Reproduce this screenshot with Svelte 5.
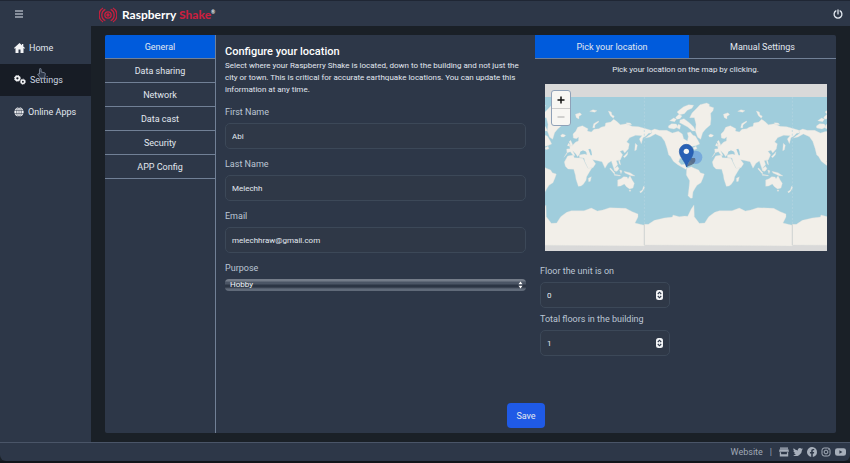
<script>
  const sections = ['General', 'Data sharing', 'Network', 'Data cast', 'Security', 'APP Config'];
  let section = $state('General');
  let mode = $state('pick');
  let firstName = $state('Abi');
  let lastName = $state('Melechh');
  let email = $state('melechhraw@gmail.com');
  let purpose = $state('Hobby');
  let floor = $state(0);
  let floors = $state(1);
  const worlds = [-444, 0, 444];
</script>

{#snippet spinner()}
  <svg class="spin" viewBox="0 0 7 10" aria-hidden="true">
    <rect width="7" height="10" rx="2.5" fill="#f1f3f5" />
    <path d="M1.8 4 3.5 2.2 5.2 4M1.8 6 3.5 7.8 5.2 6" fill="none" stroke="#2d3748" stroke-width="1.1" />
  </svg>
{/snippet}

<div class="shell">
  <header>
    <button class="icon menu" aria-label="Menu">
      <svg viewBox="0 0 8 8" width="8" height="8"><path d="M0 1h8M0 4h8M0 7h8" stroke="#e2e8f0" stroke-width="1.2" /></svg>
    </button>
    <a class="logo" href="#home">
      <svg viewBox="0 0 54 48" width="18" height="16" fill="none" stroke="#c8203f" stroke-width="4">
        <circle cx="27" cy="24" r="3" fill="#c8203f" />
        <circle cx="27" cy="24" r="9.500" />
        <path d="M19 7a19 19 0 0 0 0 34M35 7a19 19 0 0 1 0 34" />
        <path d="M12 3a25 25 0 0 0 0 42M42 3a25 25 0 0 1 0 42" stroke-width="3.500" />
        <path d="M5 8a27 27 0 0 0 0 32M49 8a27 27 0 0 1 0 32" stroke-width="2.500" />
      </svg>
      <span class="brand">Raspberry <b>Shake</b><sup>®</sup></span>
    </a>
    <button class="icon" aria-label="Power">
      <svg viewBox="0 0 10 10" width="10" height="10" fill="none" stroke="#e2e8f0" stroke-width="1.3" stroke-linecap="round">
        <path d="M5 .9v4M2.900 1.900a3.900 3.900 0 1 0 4.200 0" />
      </svg>
    </button>
  </header>

  <div class="body">
    <nav class="side" aria-label="Main">
      <a href="#home">
        <svg viewBox="0 0 11 10" width="11" height="10" fill="#f3f4f6"><path d="M5.500 0 0 5l.7.7.8-.6V10h3V6.600h2V10h3V5.100l.8.6L11 5 9.300 3.500V.9H8v1.400z" /></svg>
        Home
      </a>
      <a href="#settings" class="on">
        <svg viewBox="0 0 12 10" width="12" height="10" fill="none" stroke="#f3f4f6">
          <circle cx="3.400" cy="3.300" r="2" stroke-width="1.700" />
          <circle cx="3.400" cy="3.300" r="3" stroke-width=".8" stroke-dasharray="1.250 1.100" />
          <circle cx="8.900" cy="6.700" r="1.700" stroke-width="1.500" />
          <circle cx="8.900" cy="6.700" r="2.600" stroke-width=".8" stroke-dasharray="1.100 .95" />
        </svg>
        Settings
        <svg class="hand" viewBox="0 0 9 11" width="9" height="11"><path d="M2.500 6V1.300a.8.8 0 0 1 1.600 0V4l3.300.7c.8.200 1 .7.900 1.400L7.800 8.500v1.700H3.600L.8 6.800c-.4-.8.600-1.300 1.100-.7z" fill="#2d3748" stroke="#8a96a8" stroke-width=".8" /></svg>
      </a>
      <a href="#apps">
        <svg viewBox="0 0 10 10" width="10" height="10"><circle cx="5" cy="5" r="4.700" fill="#f3f4f6" /><path d="M0 3.500h10M0 6.500h10M5 0v10" stroke="#2d3748" stroke-width=".5" /><ellipse cx="5" cy="5" rx="2.300" ry="4.700" fill="none" stroke="#2d3748" stroke-width=".6" /></svg>
        Online Apps
      </a>
    </nav>

    <main>
      <div class="panel">
        <div class="sections" role="tablist">
          {#each sections as s}
            <button role="tab" aria-selected={section === s} class:on={section === s} onclick={() => (section = s)}>{s}</button>
          {/each}
        </div>

        <form class="content" onsubmit={(e) => e.preventDefault()}>
          <div class="cols">
            <div class="details">
              <h1>Configure your location</h1>
              <p>Select where your Raspberry Shake is located, down to the building and not just the city or town. This is critical for accurate earthquake locations. You can update this information at any time.</p>
              <div class="field"><label for="first">First Name</label><input id="first" type="text" bind:value={firstName} /></div>
              <div class="field"><label for="last">Last Name</label><input id="last" type="text" bind:value={lastName} /></div>
              <div class="field"><label for="email">Email</label><input id="email" type="email" bind:value={email} /></div>
              <div class="field">
                <label for="purpose">Purpose</label>
                <div class="pick">
                  <select id="purpose" bind:value={purpose}><option>Hobby</option></select>
                  <svg viewBox="0 0 5 8" width="5" height="8" fill="#fff" aria-hidden="true"><path d="M.5 3.300 2.500.5l2 2.800zM.5 4.700l2 2.800 2-2.800z" /></svg>
                </div>
              </div>
            </div>

            <div class="place">
              <div class="modes" role="tablist">
                <button type="button" role="tab" aria-selected={mode === 'pick'} class:on={mode === 'pick'} onclick={() => (mode = 'pick')}>Pick your location</button>
                <button type="button" role="tab" aria-selected={mode === 'manual'} class:on={mode === 'manual'} onclick={() => (mode = 'manual')}>Manual Settings</button>
              </div>
              <p class="hint">Pick your location on the map by clicking.</p>
              <div class="map">
                <svg class="world" viewBox="-405 27 846 501" preserveAspectRatio="xMidYMid slice" role="img" aria-label="World map">
                  <defs>
                    <g id="world" fill="#f2efe9" stroke="#dfe2df" stroke-width="1">
                      <path d="M-92 180l8-7-4-6 12-5 14 4 22 0 17 8 18-5 12 8 4 14 11 7 3-13-3-12 9-2 8 10 7 2 9 15 4 9-12 5-10 2-10 12-7 14 0 9 6 10-5 2-8-10-13-1-4 10 8 9 11-1 5 12-3 3-24-14-13-10-9-15-5-4-5-20-7-21-10-14-18-8-16 9-14 3 11-9z" />
                      <path d="M-35 153l10-7 14 1 5 9-12 6-16-3zM-31 137l12-8 8 4-5 7zM-13 127l10-9 9 5-6 8-10 2zM-9 111l10-8 10-8 15-6 15 2-5 9-14 6-9 10-14 3zM0 135l12-4 16 12 13 13 6 12-10 0-14-12-15-8-9-5zM-5 148l7 3-3 12-9-5z" />
                      <path d="M29 128l7-14 14-14 10-11 20-5 8 4 0 6 13 4-2 9-7 8 1 17-2 18-14 12-9 11-6 20-9-6-7-19 2-20-5-20zM86 181l6-4 9 4-5 5-8 0z" />
                      <path d="M20 280l14-5 9 5 13 5 5 8 12 4-4 12-6 14-12 8-7 11-5 9-2 18-5 1-8-8 3-23 2-22-10-17z" />
                      <path d="M105 236l-1-14 10-1-1-8 10-4 8-8 8-3 1-12-7 5-9-2-1-12 8-8 6-12 14-5 17 9-2 7 12 3 8-8 14-2 9-5 10-2 2-10 15-3 9-8 9 6 11 10 19-3 16 8 20 1 17 5 20 6 2 8-9 1-8 8-9 5-5 18-6-14 8-10-19-1-18 7-9 13 8 5-3 16-11 12-5-8-9 3 8 10-7 16-12 2 4 12-8 9 4 11-5-1-10-30-10 7-9 15-9-20-20-4-8-2 9 12-8 12-14 4-10-21-3-12-14-1 0-8 15-3 8 2-2-7-11-6-9 11-6 8-6-9-9-9 7 14-4 2-10-13-11 4-8 13z" />
                      <path d="M97 261l10-18 17-3 3 8 16 1 10 1 8 17 7 13 12-2-9 15-7 12-2 11-8 12-7 5-8 1-7-21-2-13-5-17-17-1-8-8z" />
                      <path d="M257 315l10-4 8-6 10 1 3 5 6-9 7 14 6 9-4 14-10 3-10-7-6-8-11 6-9 1zM291 345l6 0-3 5zM169 310l9-5-3 14-5 1zM323 350l8-5 4-12 3 5-6 10-6 6zM310 205l6 6-3 14-5 2zM274 245l9-9 5-6-2 10-8 8zM236 279l13 15-2 3-14-16zM248 280l9-6 4 7-6 8-7-3zM263 285l7 2-3 9zM276 289l18 4 15 10-12-1-18-8zM259 256l4 0 3 14-4-3zM246 298l19 3 0 2-18-2z" />
                      <path d="M106 212l4-8 4 5-1 5zM114 206l-3-6 5-4 5 10 1 6-8 1zM130 118l14-5 5 6-8 5 0 8-8-4zM173 109l10-5 12 3-7 5zM182 158l3-12 14-8 2 2-12 10-1 9zM229 108l9 3 2 9 7 3-3 7-9-8zM283 143l12 1 4 5-14 0zM38 219l10-5 3 7-9 3z" />
                      <path d="M-107 510v-62l12 0 18-12 17-4 12-3 25-3 2-6 19 5 15-2 10 1 11-23 8-11 1 35 15 20 16-1 12-19 18-13 14-5 38 0 22-8 18 9 16-3 21-7 48 2 20 10 17 7 0 9-9 18 28 7v62z" />
                    </g>
                  </defs>
                  <rect x="-1200" y="27" width="2400" height="501" fill="#d9d9d9" />
                  <rect x="-1200" y="66" width="2400" height="444" fill="#a0cddc" />
                  {#each worlds as x}
                    <g transform="translate({x} 0)">
                      <use href="#world" />
                      <path d="M143 236l3-7 10-2 7 4-4 4zM169 223l6-2 3 7 2 13-4 0z" fill="#a0cddc" />
                      <path d="M337 66v382" stroke="#b8d6e2" stroke-width="2" stroke-dasharray="6 5" />
                    </g>
                  {/each}
                  <path d="M-107 448v62M337 448v62" stroke="#d3d5d3" stroke-width="3" />
                  <circle cx="47" cy="247" r="20" fill="#5c93dc" opacity=".6" />
                  <path d="M20 275l14-26 11 0q5 12-9 20z" fill="#50617c" opacity=".8" />
                  <path d="M20 276C14 257-2 246-2 229a21 21 0 0 1 42 0c0 17-14 28-20 47z" fill="#2860b5" stroke="#2056a5" stroke-width="2" />
                  <circle cx="19" cy="229" r="8" fill="#f5f6f3" />
                </svg>
                <div class="zoom">
                  <button type="button" aria-label="Zoom in"><svg viewBox="0 0 8 8" width="8" height="8"><path d="M4 .5v7M.5 4h7" stroke="#111" stroke-width="1.500" /></svg></button>
                  <button type="button" aria-label="Zoom out"><svg viewBox="0 0 8 8" width="8" height="8"><path d="M.5 4h7" stroke="#aaa" /></svg></button>
                </div>
              </div>
              <div class="number"><label for="floor">Floor the unit is on</label><div><input id="floor" type="number" bind:value={floor} />{@render spinner()}</div></div>
              <div class="number"><label for="floors">Total floors in the building</label><div><input id="floors" type="number" bind:value={floors} />{@render spinner()}</div></div>
            </div>
          </div>
          <button class="save" type="submit">Save</button>
        </form>
      </div>
    </main>
  </div>

  <footer>
    <a href="#website">Website</a>
    <span>|</span>
    <a href="#shop" aria-label="Shop"><svg viewBox="0 0 10 10" width="10" height="10"><path d="M1 .5h8v1.300H1zM.6 2.300h8.800l.6 2.400H0zM.8 5.300h1.300v2h5.800v-2h1.300v4.200H.8z" /></svg></a>
    <a href="#twitter" aria-label="Twitter"><svg viewBox="0 0 24 24" width="10" height="10"><path d="M23.950 4.600a10 10 0 0 1-2.800.8 5 5 0 0 0 2.100-2.700 10 10 0 0 1-3.100 1.200 4.900 4.900 0 0 0-8.400 4.500A14 14 0 0 1 1.600 3.200a4.900 4.900 0 0 0 1.500 6.500 5 5 0 0 1-2.200-.6 4.900 4.900 0 0 0 3.900 4.900 5 5 0 0 1-2.200.1 4.900 4.900 0 0 0 4.600 3.400A9.900 9.900 0 0 1 0 19.500a14 14 0 0 0 21.500-12.400 10 10 0 0 0 2.450-2.500z" /></svg></a>
    <a href="#facebook" aria-label="Facebook"><svg viewBox="0 0 24 24" width="10" height="10"><path d="M24 12a12 12 0 1 0-13.900 11.900v-8.400h-3V12h3V9.400c0-3 1.800-4.700 4.500-4.700l2.700.2v3h-1.500c-1.500 0-2 .9-2 1.900V12h3.400l-.5 3.500h-2.800v8.400A12 12 0 0 0 24 12z" /></svg></a>
    <a href="#instagram" aria-label="Instagram"><svg class="line" viewBox="0 0 10 10" width="10" height="10"><rect x="1" y="1" width="8" height="8" rx="2.200" /><circle cx="5" cy="5" r="1.900" /><path d="M7.200 2.600h.6" /></svg></a>
    <a href="#youtube" aria-label="YouTube"><svg viewBox="0 0 11 10" width="11" height="10"><path fill-rule="evenodd" d="M2.300 1.200h6.400Q11 1.200 11 3.500v3Q11 8.800 8.700 8.800H2.300Q0 8.800 0 6.500v-3Q0 1.200 2.300 1.200zM4.400 3.300v3.400L7.400 5z" /></svg></a>
  </footer>
</div>

<style>
  :global(body) { margin: 0; background: #11151b; }
  * { box-sizing: border-box; }
  .shell {
    min-height: 100vh;
    display: flex;
    flex-direction: column;
    font: 9px/16px Roboto, sans-serif;
    color: #e2e8f0;
    background: #1a2027;
    border-bottom: 2px solid #11151b;
  }
  a { color: inherit; text-decoration: none; }
  button { font: inherit; color: inherit; border: 0; padding: 0; background: none; cursor: pointer; }
  svg { display: block; flex: none; }
  header {
    height: 26px;
    display: flex;
    align-items: center;
    padding: 0 7px 0 15px;
    background: #2d3748;
    border-top: 1px solid #1f2634;
  }
  .menu { width: 84px; }
  .logo { display: flex; align-items: center; gap: 5px; margin-right: auto; padding-top: 2px; }
  .brand { font: 700 12px/16px Lato, sans-serif; color: #fff; white-space: nowrap; }
  .brand b { color: #c8203f; }
  .brand sup { font-size: 5px; line-height: 0; vertical-align: 5px; }
  .body { flex: 1; display: flex; }
  .side { width: 91px; flex: none; padding-top: 6px; background: #2d3748; }
  .side a { position: relative; height: 32px; display: flex; align-items: center; gap: 4px; padding-left: 14px; }
  .side .on { background: #171c25; color: #cbd5e0; }
  .hand { position: absolute; left: 37px; top: 4px; }
  main { flex: 1; display: flex; min-width: 0; padding: 9px 14px; }
  .panel { flex: 1; display: flex; min-width: 0; background: #2d3748; border-radius: 2px; overflow: hidden; }
  .sections { width: 111px; flex: none; border-right: 1px solid #718096; }
  .sections button {
    display: block;
    width: 100%;
    height: 24px;
    border-bottom: 1px solid #718096;
  }
  .sections .on, .modes .on { background: #005bdc; }
  .content { flex: 1; min-width: 0; display: flex; flex-direction: column; justify-content: space-between; padding-bottom: 5px; }
  .cols { display: flex; }
  .details { flex: 1 1 319px; min-width: 0; padding: 9px 9px 0; }
  h1 { margin: 0; font-size: 11px; font-weight: 500; line-height: 16px; color: #fff; }
  p { margin: 0; font-size: 8px; line-height: 12px; }
  .details p { margin-bottom: 8px; }
  .field { margin-bottom: 7px; }
  label { display: block; margin-bottom: 3px; color: #bcc6d4; }
  input {
    display: block;
    width: 100%;
    height: 26px;
    padding: 0 6px;
    font: 8px Roboto, sans-serif;
    color: #e2e8f0;
    background: #2f3847;
    border: 1px solid #3c4858;
    border-radius: 5px;
    appearance: textfield;
  }
  input::-webkit-inner-spin-button { appearance: none; margin: 0; }
  .pick { position: relative; }
  .pick svg { position: absolute; right: 3px; top: 2px; }
  select {
    display: block;
    width: 100%;
    height: 12px;
    padding: 0 5px;
    appearance: none;
    font: 8px/12px Roboto, sans-serif;
    color: #f1f5f9;
    background: linear-gradient(#747c89 0 2px, #4b5565 3px 5px, #2c3544 6px 8px, #606a79 10px);
    border: 0;
    border-radius: 4px;
  }
  .place { flex: 1 1 301px; min-width: 0; }
  .modes { display: flex; border-bottom: 1px solid #718096; }
  .modes button { flex: 147; height: 23px; }
  .modes .on { flex-grow: 154; }
  .hint { text-align: center; padding: 5px 0 8px; }
  .map { position: relative; height: 167px; margin: 0 9px 12px 10px; overflow: hidden; }
  .world { width: 100%; height: 100%; }
  .zoom {
    position: absolute;
    left: 6px;
    top: 6px;
    width: 20px;
    border: 1px solid #8fa1b8;
    border-radius: 3px;
    background: #f7f6f3;
    overflow: hidden;
  }
  .zoom button { width: 18px; height: 17px; display: grid; place-items: center; }
  .zoom button + button { border-top: 1px solid #ccc; }
  .number { width: 130px; margin: 0 0 3px 5px; }
  .number div { position: relative; }
  .spin { position: absolute; right: 7px; top: 8px; width: 7px; height: 10px; }
  .save { align-self: center; height: 25px; padding: 0 9px; background: #1f5ae6; border-radius: 4px; }
  footer {
    height: 19px;
    display: flex;
    align-items: center;
    justify-content: flex-end;
    gap: 4px;
    padding: 0 4px;
    color: #a0a9b6;
    background: #2d3748;
    border-top: 1px solid #4a5568;
    border-radius: 0 0 6px 6px;
  }
  footer span { margin: 0 3px; }
  footer svg { fill: #a7afbb; }
  footer .line { fill: none; stroke: #a7afbb; }
</style>
